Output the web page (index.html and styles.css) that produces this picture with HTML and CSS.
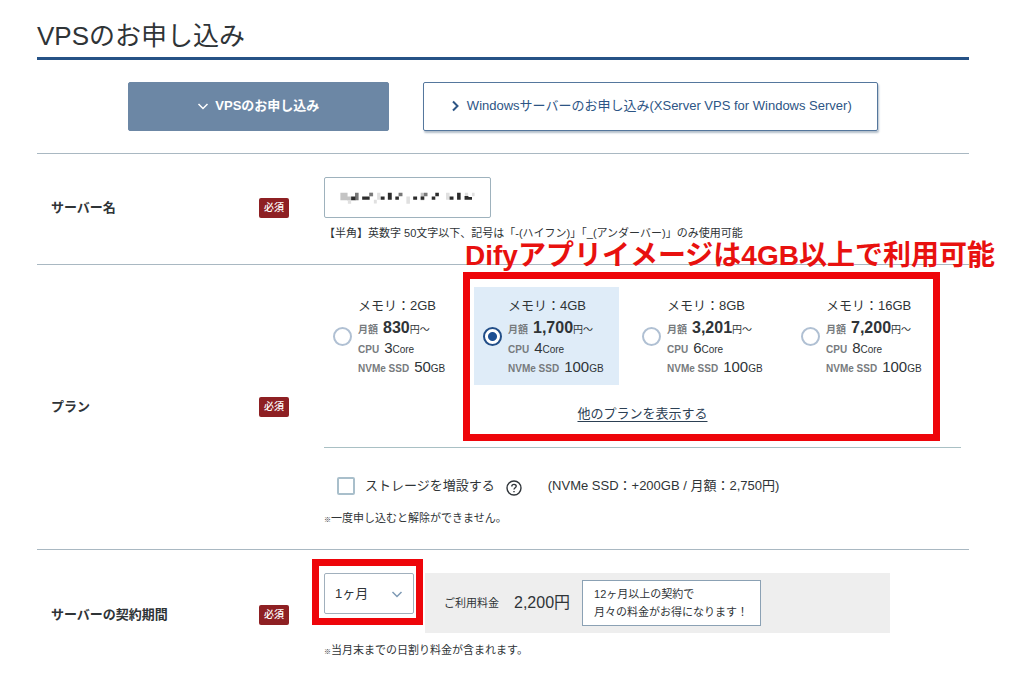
FILE: index.html
```html
<!DOCTYPE html>
<html lang="ja">
<head>
<meta charset="utf-8">
<meta name="viewport" content="width=device-width, initial-scale=1">
<title>VPSのお申し込み</title>
<link rel="stylesheet" href="styles.css">
</head>
<body>
<main class="page">
  <h1 class="title">VPSのお申し込み</h1>
  <nav class="tabs">
    <button class="tab tab-current" type="button">
      <svg class="chevron" viewBox="0 0 12 12" aria-hidden="true"><path d="M1.5 4 6 8.500 10.500 4"/></svg>
      VPSのお申し込み
    </button>
    <a class="tab tab-link" href="#windows">
      <svg class="chevron chevron-bold" viewBox="0 0 12 12" aria-hidden="true"><path d="M4 1.500 8.500 6 4 10.500"/></svg>
      Windowsサーバーのお申し込み(XServer VPS for Windows Server)
    </a>
  </nav>
  <form class="form">
    <section class="row">
      <label class="row-label" for="server-name">サーバー名</label>
      <span class="required">必須</span>
      <div class="row-body">
        <div class="name-field">
          <input class="name-input" id="server-name" type="text">
          <svg class="mosaic" viewBox="925 80 420 40" aria-hidden="true">
            <path fill="#c4c4c4" d="M927 82h22v23h-22zM948 94h12v12h-12zM1174 82h11v23h-11zM1016 82h12v11h-12z"/>
            <path fill="#e0e0e0" d="M950 106h10v10h-10zM1040 82h10v22h-10zM1130 94h11v22h-11zM1332 82h8v11h-8zM1252 82h11v22h-11zM1030 104h9v11h-9zM1310 82h10v11h-10z"/>
            <path fill="#777" d="M972 82h11v23h-11zM1106 82h12v11h-12zM1184 82h11v11h-11zM1016 82h11v11h-11z"/>
            <path fill="#2c2c2c" d="M960 94h13v11h-13zM994 94h23v10h-23zM1051 94h12v10h-12zM1073 82h12v22h-12zM1096 94h11v10h-11zM1151 94h12v10h-12zM1174 94h11v10h-11zM1208 94h11v10h-11zM1219 82h11v11h-11zM1263 94h12v10h-12zM1286 82h11v22h-11zM1309 92h12v12h-12zM1321 95h11v9h-11z"/>
          </svg>
        </div>
        <p class="hint">【半角】英数字 50文字以下、記号は「-(ハイフン)」「_(アンダーバー)」のみ使用可能</p>
      </div>
    </section>
    <section class="row row-plan">
      <span class="row-label">プラン</span>
      <span class="required">必須</span>
      <div class="row-body">
        <div class="plan-area">
          <div class="plans" role="radiogroup" aria-label="プラン">
            <label class="plan">
              <input class="radio" type="radio" name="plan">
              <span class="specs">
                <span class="memory">メモリ：2GB</span>
                <span class="spec"><b>月額</b> <strong>830</strong><small>円〜</small></span>
                <span class="spec"><b>CPU</b> <em>3</em><i>Core</i></span>
                <span class="spec"><b>NVMe SSD</b> <em>50</em><i>GB</i></span>
              </span>
            </label>
            <label class="plan plan-selected">
              <input class="radio" type="radio" name="plan" checked>
              <span class="specs">
                <span class="memory">メモリ：4GB</span>
                <span class="spec"><b>月額</b> <strong>1,700</strong><small>円〜</small></span>
                <span class="spec"><b>CPU</b> <em>4</em><i>Core</i></span>
                <span class="spec"><b>NVMe SSD</b> <em>100</em><i>GB</i></span>
              </span>
            </label>
            <label class="plan">
              <input class="radio" type="radio" name="plan">
              <span class="specs">
                <span class="memory">メモリ：8GB</span>
                <span class="spec"><b>月額</b> <strong>3,201</strong><small>円〜</small></span>
                <span class="spec"><b>CPU</b> <em>6</em><i>Core</i></span>
                <span class="spec"><b>NVMe SSD</b> <em>100</em><i>GB</i></span>
              </span>
            </label>
            <label class="plan">
              <input class="radio" type="radio" name="plan">
              <span class="specs">
                <span class="memory">メモリ：16GB</span>
                <span class="spec"><b>月額</b> <strong>7,200</strong><small>円〜</small></span>
                <span class="spec"><b>CPU</b> <em>8</em><i>Core</i></span>
                <span class="spec"><b>NVMe SSD</b> <em>100</em><i>GB</i></span>
              </span>
            </label>
          </div>
          <p class="more"><a class="more-link" href="#plans">他のプランを表示する</a></p>
          <div class="mark mark-plans"></div>
          <p class="callout">Difyアプリイメージは4GB以上で利用可能</p>
        </div>
        <div class="storage">
          <input class="check" id="storage" type="checkbox">
          <label for="storage">ストレージを増設する</label>
          <svg class="help" viewBox="0 0 16 16" role="img" aria-label="ヘルプ"><circle cx="8" cy="8" r="7"/><path d="M5.800 6.500C5.800 3.700 10.300 3.800 10.200 6.300 10.100 7.800 8 7.800 8 9.600M8 10.900V12.300"/></svg>
          <span class="storage-price">(NVMe SSD：+200GB / 月額：2,750円)</span>
        </div>
        <p class="note"><span class="note-mark">※</span>一度申し込むと解除ができません。</p>
      </div>
    </section>
    <section class="row row-term">
      <label class="row-label" for="term">サーバーの契約期間</label>
      <span class="required">必須</span>
      <div class="row-body">
        <div class="term">
          <div class="term-field">
            <select class="term-select" id="term"><option>1ヶ月</option></select>
            <svg class="chevron term-arrow" viewBox="0 0 12 12" aria-hidden="true"><path d="M1.500 4 6 8.500 10.500 4"/></svg>
            <div class="mark mark-term"></div>
          </div>
          <div class="fee">
            <span class="fee-label">ご利用料金</span>
            <span class="fee-value">2,200円</span>
            <p class="fee-tip">12ヶ月以上の契約で<br>月々の料金がお得になります！</p>
          </div>
        </div>
        <p class="note note-term"><span class="note-mark">※</span>当月末までの日割り料金が含まれます。</p>
      </div>
    </section>
  </form>
</main>
</body>
</html>
```
FILE: styles.css
```css
* {
  box-sizing: border-box;
}

body {
  margin: 0;
  background: #fff;
  color: #2f3437;
  font: 13px/20px "Liberation Sans", "Noto Sans CJK JP", sans-serif;
}

p {
  margin: 0;
}

input,
select,
button {
  margin: 0;
  font: inherit;
  color: inherit;
}

.page {
  padding: 16px 55px 0 37px;
}

.title {
  margin: 0;
  padding-bottom: 1px;
  border-bottom: 3px solid #265286;
  font-size: 26px;
  font-weight: 400;
  line-height: 40px;
}

.tabs {
  display: grid;
  grid-template-columns: 261fr 456fr;
  gap: 34px;
  padding: 22px 91px;
}

.tab {
  display: flex;
  align-items: center;
  justify-content: center;
  gap: 6px;
  height: 49px;
  padding: 0 0 2px;
  border: 1px solid #55779d;
  border-radius: 2px;
  white-space: nowrap;
}

.tab-current {
  border-color: #6c87a5;
  background: #6c87a5;
  color: #fff;
  font-weight: 700;
}

.tab-link {
  box-shadow: 1px 2px 2px #b4bfcb;
  color: #2d5585;
  text-decoration: none;
}

.chevron {
  flex: none;
  width: 12px;
  height: 12px;
  fill: none;
  stroke: currentColor;
  stroke-width: 1.5;
}

.chevron-bold {
  stroke-width: 2;
}

.row {
  display: grid;
  grid-template-columns: 222px 65px 1fr;
  align-items: center;
  padding: 23px 0 22px;
  border-top: 1px solid #a9b8c2;
}

.row-plan {
  padding: 22px 0 19px;
}

.row-term {
  padding-bottom: 10px;
}

.row-label {
  padding: 0 0 4px 14px;
  font-weight: 700;
}

.required {
  justify-self: start;
  margin-bottom: 4px;
  padding: 0 5px;
  border-radius: 2px;
  background: #8e2023;
  color: #fff;
  font-size: 10px;
  font-weight: 500;
}

.row-body {
  padding-right: 8px;
}

.name-field {
  position: relative;
  width: 167px;
}

.name-input {
  display: block;
  width: 100%;
  height: 41px;
  padding: 0 14px;
  border: 1px solid #9eb2bd;
  border-radius: 2px;
}

.mosaic {
  position: absolute;
  top: 15px;
  left: 14px;
  width: 140px;
  height: 13px;
}

.hint,
.note {
  font-size: 11px;
}

.hint {
  padding-top: 6px;
  line-height: 18px;
}

.plan-area {
  position: relative;
  padding-bottom: 23px;
  border-bottom: 1px solid #a9c0c4;
}

.plans {
  display: grid;
  grid-template-columns: 136px 145px 145px 145px;
  gap: 14px;
}

.plan {
  display: flex;
  align-items: center;
  gap: 6px;
  height: 98px;
  padding-left: 9px;
  white-space: nowrap;
}

.plan-selected {
  background: #dfecf8;
}

.radio {
  appearance: none;
  flex: none;
  width: 19px;
  height: 19px;
  border: 2px solid #b0c0d3;
  border-radius: 50%;
  background: #fff;
}

.radio:checked {
  border-color: #224e88;
  background: radial-gradient(circle, #1d4f93 4px, #fff 5px);
}

.specs {
  display: grid;
  grid-template-rows: 23px 20px 19px 20px;
  padding-bottom: 1px;
}

.memory {
  line-height: 22px;
}

.spec {
  display: flex;
  align-items: baseline;
  gap: 5px;
  line-height: 20px;
}

.spec b {
  color: #777b7e;
  font-size: 10px;
}

.spec strong {
  font-size: 16px;
}

.spec em {
  font-size: 15px;
  font-style: normal;
}

.spec i,
.spec small {
  margin-left: -5px;
  font-size: 10px;
  font-style: normal;
}

.more {
  padding-top: 19px;
  text-align: center;
}

.more-link {
  color: #2c4054;
  text-underline-offset: 3px;
}

.mark {
  position: absolute;
  border: 7px solid #ee050a;
  pointer-events: none;
}

.mark-plans {
  top: -15px;
  left: 139px;
  width: 477px;
  height: 169px;
}

.callout {
  position: absolute;
  top: -51px;
  left: 141px;
  color: #e8110f;
  font-size: 28px;
  font-weight: 700;
  line-height: 40px;
  white-space: nowrap;
}

.storage {
  display: flex;
  align-items: center;
  padding: 28px 0 12px 13px;
}

.check {
  appearance: none;
  width: 18px;
  height: 18px;
  margin-right: 10px;
  border: 2px solid #a9bfcb;
  border-radius: 2px;
}

.help {
  width: 16px;
  height: 16px;
  margin: 3px 26px 0 11px;
  fill: none;
  stroke: #30353a;
  stroke-width: 1.4;
}

.note-mark {
  font-size: 7px;
}

.term {
  display: flex;
  gap: 11px;
  padding-right: 71px;
}

.term-field {
  position: relative;
  flex: none;
  width: 90px;
}

.term-select {
  appearance: none;
  width: 100%;
  height: 41px;
  padding: 0 10px;
  border: 1px solid #a1b0bd;
  border-radius: 2px;
  background: #fff;
}

.term-arrow {
  position: absolute;
  top: 15px;
  right: 11px;
  color: #7e9ab5;
}

.mark-term {
  top: -14px;
  left: -12px;
  width: 111px;
  height: 66px;
}

.fee {
  display: flex;
  flex: 1;
  align-items: center;
  height: 60px;
  padding-left: 19px;
  background: #eee;
}

.fee-label {
  font-size: 11px;
}

.fee-value {
  margin: 0 12px 0 15px;
  font-size: 16px;
}

.fee-tip {
  padding: 4px 12px 4px 11px;
  border: 1px solid #8ba1b4;
  background: #fff;
  font-size: 11px;
  line-height: 18px;
}

.note-term {
  padding-top: 8px;
  line-height: 18px;
}
```
